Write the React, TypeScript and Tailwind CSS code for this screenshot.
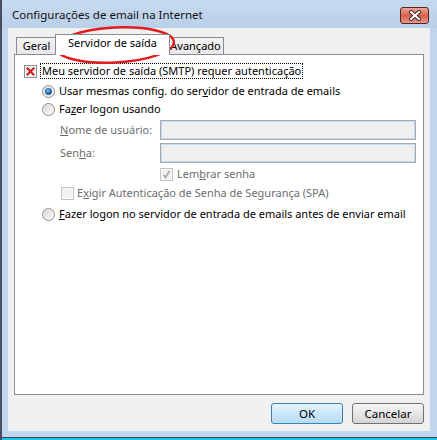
import React from "react";

function CheckBox({ kind }: { kind: "x" | "checkdis" | "dis" }) {
  if (kind === "x") {
    return (
      <svg width="13" height="13" viewBox="0 0 13 13" className="shrink-0">
        <defs>
          <linearGradient id="cbx" x1="0" y1="0" x2="1" y2="1">
            <stop offset="0" stopColor="#dcdcdc" />
            <stop offset="1" stopColor="#ffffff" />
          </linearGradient>
        </defs>
        <rect x="0.5" y="0.5" width="12" height="12" fill="#f4f4f4" stroke="#8e8f8f" />
        <rect x="1.5" y="1.5" width="10" height="10" fill="url(#cbx)" stroke="#f4f4f4" />
        <path d="M3.5 3.5 L9.5 9.5 M9.5 3.5 L3.5 9.5" stroke="#d11a1a" strokeWidth="2" strokeLinecap="square" />
      </svg>
    );
  }
  return (
    <svg width="13" height="13" viewBox="0 0 13 13" className="shrink-0">
      <rect x="0.5" y="0.5" width="12" height="12" fill="#f4f4f4" stroke="#c3c3c3" />
      <rect x="1.5" y="1.5" width="10" height="10" fill="#f1f1f1" stroke="#f8f8f8" />
      {kind === "checkdis" && (
        <path d="M3.5 6.8 L5.5 9.5 L9.5 3" stroke="#a9a9a9" strokeWidth="1.6" fill="none" />
      )}
    </svg>
  );
}

function Radio({ checked, id }: { checked?: boolean; id: string }) {
  return (
    <svg width="13" height="13" viewBox="0 0 13 13" className="shrink-0">
      <defs>
        <linearGradient id={`rb-${id}`} x1="0" y1="0" x2="1" y2="1">
          <stop offset="0" stopColor="#d5d5d5" />
          <stop offset="1" stopColor="#fbfbfb" />
        </linearGradient>
        <radialGradient id={`rd-${id}`} cx="0.4" cy="0.35" r="0.7">
          <stop offset="0" stopColor="#9fd3f6" />
          <stop offset="0.45" stopColor="#2b86c9" />
          <stop offset="1" stopColor="#0f3f74" />
        </radialGradient>
      </defs>
      <circle cx="6.5" cy="6.5" r="6" fill="#f0f0f0" stroke="#8b8d8f" />
      <circle cx="6.5" cy="6.5" r="5" fill={`url(#rb-${id})`} />
      {checked && <circle cx="6.5" cy="6.5" r="3.2" fill={`url(#rd-${id})`} stroke="#1c4e80" strokeWidth="0.5" />}
    </svg>
  );
}

export default function App() {
  return (
    <div className="w-[437px] h-[440px] flex flex-col bg-[#c1d5ec] border-l-2 border-[#4b4a5e] relative font-['Noto_Sans',sans-serif] text-[11px] text-black overflow-hidden whitespace-nowrap">
      {/* Title bar */}
      <div className="h-[28px] flex justify-between bg-gradient-to-b from-[#c6daef] to-[#bad0e9]">
        <div className="pl-[10px] pt-[6px] text-[11.5px] text-[#111]">Configurações de email na Internet</div>
        <div className="mt-[7px] mr-[8px] w-[29px] h-[17px] rounded-[3px] border border-[#5a2424] bg-gradient-to-b from-[#eaa89b] via-[#d5604c] to-[#e49a8c] flex items-center justify-center">
          <svg width="14" height="11" viewBox="0 0 14 11">
            <path d="M3 2 L11 9 M11 2 L3 9" stroke="#3b2424" strokeWidth="4" strokeLinecap="round" />
            <path d="M3 2 L11 9 M11 2 L3 9" stroke="#ffffff" strokeWidth="2.2" strokeLinecap="round" />
          </svg>
        </div>
      </div>

      {/* Client area */}
      <div className="ml-[6px] w-[422px] h-[403px] bg-[#f0f0f0] flex flex-col pl-[6px] pr-[6px] pt-[6px]">
        {/* Tabs */}
        <div className="h-[21px] flex items-end pl-[2px]">
          <div className="w-[41px] h-[18px] border-t border-l border-r border-[#898c95] bg-gradient-to-b from-[#f3f3f3] to-[#e6e6e6] flex items-center justify-center pb-[1px]">
            Geral
          </div>
          <div className="relative z-10 ml-[-2px] w-[115px] h-[21px] border-t border-l border-r border-[#898c95] bg-white flex items-center justify-center pb-[3px]">
            Servidor de saída
          </div>
          <div className="ml-[-2px] w-[56px] h-[18px] border-t border-r border-[#898c95] bg-gradient-to-b from-[#f3f3f3] to-[#e6e6e6] flex items-center justify-center pb-[1px]">
            Avançado
          </div>
        </div>

        {/* Panel */}
        <div className="-mt-px w-[410px] h-[341px] border border-[#898c95] bg-white flex flex-col pt-[7px] pl-[9px]">
          <div className="h-[18px] flex items-center gap-[3px]">
            <CheckBox kind="x" />
            <span className="border border-dotted border-black px-[1px] leading-[14px]">
              Meu servidor de saída (SMTP) requer autenticação
            </span>
          </div>
          <div className="mt-[2px] h-[18px] flex items-center gap-[4px] pl-[18px]">
            <Radio checked id="a" />
            <span>
              Usar mesmas config. do ser<span className="underline">v</span>idor de entrada de emails
            </span>
          </div>
          <div className="h-[18px] flex items-center gap-[4px] pl-[18px]">
            <Radio id="b" />
            <span>
              Fa<span className="underline">z</span>er logon usando
            </span>
          </div>
          <div className="mt-[2px] h-[20px] flex items-center">
            <span className="w-[136px] shrink-0 pl-[36px] text-[#6d6d6d]">
              <span className="underline">N</span>ome de usuário:
            </span>
            <div className="w-[256px] h-[20px] border border-[#a6abb1] bg-[#f0f0f0] shadow-[inset_0_0_0_1px_#c9dbf0]" />
          </div>
          <div className="mt-[3px] h-[20px] flex items-center">
            <span className="w-[136px] shrink-0 pl-[36px] text-[#6d6d6d]">
              Sen<span className="underline">h</span>a:
            </span>
            <div className="w-[256px] h-[20px] border border-[#a6abb1] bg-[#f0f0f0] shadow-[inset_0_0_0_1px_#c9dbf0]" />
          </div>
          <div className="mt-[2px] h-[18px] flex items-center gap-[4px] pl-[136px] text-[#6d6d6d]">
            <CheckBox kind="checkdis" />
            <span>
              Lem<span className="underline">b</span>rar senha
            </span>
          </div>
          <div className="mt-[1px] h-[18px] flex items-center gap-[3px] pl-[37px] text-[#6d6d6d]">
            <CheckBox kind="dis" />
            <span>
              E<span className="underline">x</span>igir Autenticação de Senha de Segurança (SPA)
            </span>
          </div>
          <div className="mt-[3px] h-[18px] flex items-center gap-[4px] pl-[18px]">
            <Radio id="c" />
            <span>
              <span className="underline">F</span>azer logon no servidor de entrada de emails antes de enviar email
            </span>
          </div>
        </div>

        {/* Buttons */}
        <div className="mt-[8px] flex justify-end gap-[9px]">
          <button className="w-[72px] h-[21px] rounded-[3px] border border-[#3c7fb1] bg-gradient-to-b from-[#e5f3fc] via-[#cbe6f8] to-[#b6dcf5] text-[11.5px] leading-none">
            OK
          </button>
          <button className="w-[72px] h-[21px] rounded-[3px] border border-[#707070] bg-gradient-to-b from-[#f4f4f4] via-[#e6e6e6] to-[#d4d4d4] text-[11.5px] leading-none">
            Cancelar
          </button>
        </div>
      </div>

      <div className="h-[6px]" />
      <div className="h-[1px] bg-[#3a4a5a]" />
      <div className="h-[2px] bg-[#1fc4e4]" />

      {/* annotation ellipse over the tab */}
      <svg className="absolute left-[48px] top-[22px] pointer-events-none" width="130" height="46" viewBox="0 0 130 46">
        <ellipse cx="65" cy="23" rx="59" ry="17.5" fill="none" stroke="#e21c1c" strokeWidth="2.4" transform="rotate(-3 65 23)" />
      </svg>
    </div>
  );
}
